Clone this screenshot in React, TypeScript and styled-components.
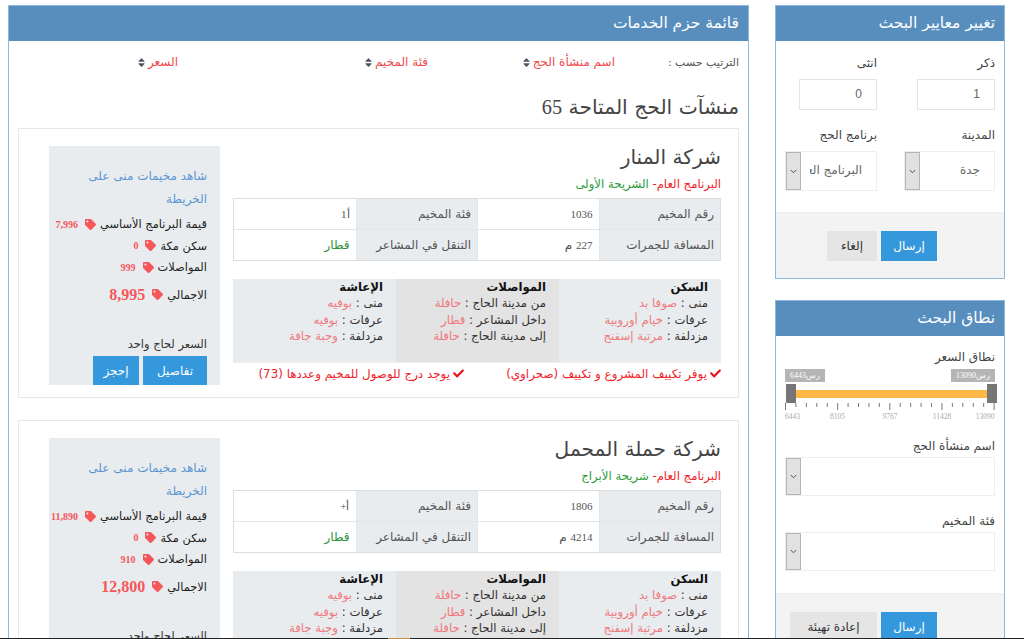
import React from "react";
import styled, { createGlobalStyle } from "styled-components";
import { FaTag, FaCheck, FaSort } from "react-icons/fa";

const Global = createGlobalStyle`
  html, body { margin: 0; padding: 0; background: #fff; height: 639px; overflow: hidden; }
  body { font-family: "DejaVu Sans", "Noto Sans", sans-serif; direction: rtl; color: #333; }
`;
const Page = styled.div`
  display: flex; gap: 26px; height: 638px; padding: 5px 19px 0 8px; box-sizing: border-box; overflow: hidden;
`;
const Strip = styled.div`
  height: 1px; display: flex; background: #222; direction: ltr;
`;
const StripMark = styled.span`
  margin-left: 388px; width: 22px; background: #c98a3a;
`;
const Side = styled.aside`
  width: 230px; flex: none; display: flex; flex-direction: column; gap: 21px;
`;
const MainCol = styled.main`
  flex: 1; min-width: 0;
`;
const Panel = styled.section`
  border: 1px solid #8fb6dc; background: #fff;
`;
const PanelHead = styled.h2`
  margin: 0; height: 35px; line-height: 34px; background: #578ebe; color: #fff; font-size: 15.5px; font-weight: 400; padding: 0 9px;
`;
const FormBody = styled.div<{ $top: number }>`
  padding: ${(p) => p.$top}px 9px 0;
`;
const FormGrid = styled.div`
  display: grid; grid-template-columns: 91px 92px; column-gap: 27px; row-gap: 15px;
`;
const NumberGrid = styled(FormGrid)`
  grid-template-columns: 78px 78px; column-gap: 40px; margin-bottom: 15px;
`;
const Field = styled.div<{ $mb?: number }>`
  display: flex; flex-direction: column; margin-bottom: ${(p) => p.$mb ?? 0}px;
`;
const Label = styled.label<{ $mb?: number }>`
  font-size: 12px; height: 20px; line-height: 20px; color: #444; margin-bottom: ${(p) => p.$mb ?? 6}px; display: block;
`;
const NumInput = styled.div`
  height: 31px; box-sizing: border-box; border: 1px solid #e5e5e5; font-family: "Liberation Sans", sans-serif;
  font-size: 12px; line-height: 29px; padding: 0 14px; color: #666;
`;
const SelectBox = styled.div<{ $h?: number }>`
  display: flex; height: ${(p) => p.$h ?? 39}px; box-sizing: border-box; border: 1px solid #eee; align-items: stretch; overflow: hidden;
`;
const SelectInner = styled.span`
  flex: 1; min-width: 0; margin: 0 14px 0 9px; overflow: hidden;
`;
const SelectText = styled.span`
  display: block; font-size: 12px; color: #666; line-height: 37px; white-space: nowrap;
`;
const Caret = styled.span`
  width: 13px; flex: none; background: #e1e1e1; border: 1px solid #b5b5b5; display: flex; align-items: center; justify-content: center; direction: ltr;
`;
const PanelFoot = styled.div<{ $h: number; $mt: number; $top: number }>`
  height: ${(p) => p.$h}px; margin-top: ${(p) => p.$mt}px; background: #f3f3f3; border-top: 1px solid #eee; box-sizing: border-box;
  display: flex; gap: 4px; padding: ${(p) => p.$top}px 67px 0 0;
  align-items: flex-start;
`;
const Btn = styled.button<{ $light?: boolean; $w: number; $h?: number }>`
  width: ${(p) => p.$w}px; height: ${(p) => p.$h ?? 30}px; border: 0; padding: 0; margin: 0; font-family: inherit; font-size: 12px; flex: none;
  background: ${(p) => (p.$light ? "#e5e5e5" : "#3598dc")}; color: ${(p) => (p.$light ? "#333" : "#fff")};
`;
const SliderWrap = styled.div`
  position: relative; height: 67px; direction: ltr;
`;
const Bubble = styled.div<{ $left?: number; $right?: number; $w: number }>`
  position: absolute; top: 0; ${(p) => (p.$left !== undefined ? `left:${p.$left}px;` : `right:${p.$right}px;`)} height: 13px; width: ${(p) => p.$w}px; text-align: center; background: #b5b5b5; color: #fff; font-size: 8px; line-height: 13px; font-family: "Liberation Serif", serif; white-space: nowrap;
`;
const Track = styled.div`
  position: absolute; top: 21px; left: 11px; right: 8px; height: 7.5px; background: #ffb848;
`;
const Handle = styled.div<{ $left?: number; $right?: number }>`
  position: absolute; top: 15px; ${(p) => (p.$left !== undefined ? `left:${p.$left}px;` : `right:${p.$right}px;`)} width: 10px; height: 19px; background: #767676;
`;
const Ticks = styled.svg`
  position: absolute; top: 34px; left: 0;
`;
const TickLabel = styled.span`
  position: absolute; top: 43px; font-family: "Liberation Serif", serif; font-size: 7.5px; color: #a3adb5; transform: translateX(-50%);
`;
const SortBar = styled.div`
  display: flex; height: 42px; align-items: center; padding: 0 9px; font-size: 12px; color: #555;
`;
const SortCell = styled.span<{ $w: number; $lead?: boolean }>`
  width: ${(p) => p.$w}px; flex: none; color: ${(p) => (p.$lead ? "#555" : "#f0484b")}; font-size: ${(p) => (p.$lead ? 11 : 12)}px; display: inline-flex; gap: 3px; align-items: center; white-space: nowrap;
  & svg { flex: none; color: #4a5560; }
`;
const BigTitle = styled.h1`
  margin: 5px 9px 0; font-size: 20.3px; font-weight: 400; line-height: 38px; height: 38px; color: #444;
  & span { font-family: "Liberation Serif", serif; }
`;
const Card = styled.article`
  margin: 2px 9px 22px; height: 270px; border: 1px solid #e8e8e8; display: flex; gap: 13px; padding: 15px 17px 0 0; box-sizing: border-box;
`;
const CardMain = styled.div`
  width: 488px; flex: none;
`;
const CompanyTitle = styled.h3`
  margin: 0; font-size: 20.2px; font-weight: 400; line-height: 26px; height: 26px; color: #444; white-space: nowrap;
`;
const Programme = styled.div`
  font-size: 11.7px; line-height: 20px; height: 20px; margin-top: 4px; margin-bottom: 4px; color: #f1232a; white-space: nowrap;
  & b { font-weight: 400; color: #2d9b3c; }
`;
const InfoGrid = styled.div`
  display: grid; grid-template-columns: repeat(4, 1fr); border: 1px solid #ddd; box-sizing: border-box; width: 488px;
`;
const InfoCell = styled.div<{ $head?: boolean; $green?: boolean }>`
  height: 30.5px; line-height: 30px; box-sizing: border-box; padding: 0 6px; font-size: 12px; white-space: nowrap; border-left: 1px solid #e3e6e8; border-bottom: 1px solid #e3e6e8; color: ${(p) => (p.$green ? "#2d9440" : "#555")}; background: ${(p) => (p.$head ? "#e9ecef" : "#fff")};
  &:nth-last-child(-n + 4) { border-bottom: 0; }
  &:nth-child(4n) { border-left: 0; }
`;
const NumText = styled.span`
  font-family: "Liberation Serif", serif; font-size: 11px;
`;
const Services = styled.div`
  margin-top: 18px; display: grid; grid-template-columns: 162px 163px 163px; width: 488px; height: 83px; border-bottom: 1px solid #eee;
`;
const ServiceCol = styled.div<{ $dark?: boolean }>`
  background: ${(p) => (p.$dark ? "#e3e3e3" : "#e9ecef")}; padding: 0 13px 0 4px; font-size: 11.7px; line-height: 16.3px; color: #333; white-space: nowrap;
  & strong { display: block; font-size: 11.7px; color: #111; }
  & em { font-style: normal; color: #f0787c; }
`;
const Notes = styled.div`
  display: flex; font-size: 11.9px; color: #f1232a; height: 21px; align-items: center;
`;
const Note = styled.div`
  width: 257px; flex: none; display: flex; gap: 3px; align-items: center; white-space: nowrap;
  & svg { flex: none; color: #e8121c; }
`;
const PriceBox = styled.div`
  width: 171px; flex: none; margin-top: 2px; background: #e9ecef; padding: 18.5px 13px 0 0; box-sizing: border-box; height: 239px; display: flex; flex-direction: column; overflow: hidden;
`;
const MapLink = styled.div`
  color: #5b96d3; font-size: 12px; line-height: 23px; margin-bottom: 3px; padding-left: 13px;
`;
const PriceRow = styled.div<{ $big?: boolean }>`
  display: flex; align-items: center; gap: 4px; flex: none; height: ${(p) => (p.$big ? 32 : 21.5)}px; margin-top: ${(p) => (p.$big ? 0.5 : 0)}px; font-size: 11.4px; color: #222; white-space: nowrap;
  & svg { flex: none; color: #f4565a; }
`;
const Amount = styled.span<{ $big?: boolean }>`
  font-family: "Liberation Serif", serif; font-weight: 700; color: #f4565a; font-size: ${(p) => (p.$big ? 16 : 10)}px; margin-right: 3px;
`;
const PerPilgrim = styled.div`
  font-size: 11.4px; margin-top: 23px; line-height: 20px; color: #333; flex: none;
`;
const BtnRow = styled.div`
  display: flex; gap: 4px; margin-top: 2px; flex: none;
`;

const Chevron = () => (
  <svg width="7" height="5" viewBox="0 0 7 5"><path d="M0.8 1 L3.5 3.8 L6.2 1" fill="none" stroke="#555" strokeWidth="1" /></svg>
);
const Sort = () => <FaSort style={{ width: 7, height: 11 }} />;
const Tag = () => <FaTag size={11} />;
const Check = () => <FaCheck size={11} />;

type Co = { name: string; tier: string; no: string; cat: string; dist: string; base: string; mecca: string; trans: string; total: string; };
const companies: Co[] = [
  { name: "شركة المنار", tier: "الشريحة الأولى", no: "1036", cat: "أ1", dist: "227", base: "7,996", mecca: "0", trans: "999", total: "8,995" },
  { name: "شركة حملة المحمل", tier: "شريحة الأبراج", no: "1806", cat: "أ+", dist: "4214", base: "11,890", mecca: "0", trans: "910", total: "12,800" },
];

const CompanyCard = ({ c }: { c: Co }) => (
  <Card>
    <CardMain>
      <CompanyTitle>{c.name}</CompanyTitle>
      <Programme>البرنامج العام- <b>{c.tier}</b></Programme>
      <InfoGrid>
        <InfoCell $head>رقم المخيم</InfoCell>
        <InfoCell><NumText>{c.no}</NumText></InfoCell>
        <InfoCell $head>فئة المخيم</InfoCell>
        <InfoCell><NumText>{c.cat}</NumText></InfoCell>
        <InfoCell $head>المسافة للجمرات</InfoCell>
        <InfoCell><NumText>{c.dist}</NumText> م</InfoCell>
        <InfoCell $head>التنقل في المشاعر</InfoCell>
        <InfoCell $green>قطار</InfoCell>
      </InfoGrid>
      <Services>
        <ServiceCol>
          <strong>السكن</strong>
          <div>منى : <em>صوفا بد</em></div>
          <div>عرفات : <em>خيام أوروبية</em></div>
          <div>مزدلفة : <em>مرتبة إسفنج</em></div>
        </ServiceCol>
        <ServiceCol $dark>
          <strong>المواصلات</strong>
          <div>من مدينة الحاج : <em>حافلة</em></div>
          <div>داخل المشاعر : <em>قطار</em></div>
          <div>إلى مدينة الحاج : <em>حافلة</em></div>
        </ServiceCol>
        <ServiceCol>
          <strong>الإعاشة</strong>
          <div>منى : <em>بوفيه</em></div>
          <div>عرفات : <em>بوفيه</em></div>
          <div>مزدلفة : <em>وجبة جافة</em></div>
        </ServiceCol>
      </Services>
      <Notes>
        <Note><Check /><span>يوفر تكييف المشروع و تكييف (صحراوي)</span></Note>
        <Note><Check /><span>يوجد درج للوصول للمخيم وعددها (73)</span></Note>
      </Notes>
    </CardMain>
    <PriceBox>
      <MapLink>شاهد مخيمات منى على الخريطة</MapLink>
      <PriceRow>قيمة البرنامج الأساسي <Tag /><Amount>{c.base}</Amount></PriceRow>
      <PriceRow>سكن مكة <Tag /><Amount>{c.mecca}</Amount></PriceRow>
      <PriceRow>المواصلات <Tag /><Amount>{c.trans}</Amount></PriceRow>
      <PriceRow $big>الاجمالي <Tag /><Amount $big>{c.total}</Amount></PriceRow>
      <PerPilgrim>السعر لحاج واحد</PerPilgrim>
      <BtnRow><Btn $w={64}>تفاصيل</Btn><Btn $w={46}>إحجز</Btn></BtnRow>
    </PriceBox>
  </Card>
);

const ticks = Array.from({ length: 21 }, (_, i) => i);

export default function App() {
  return (
    <>
      <Global />
      <Page>
        <Side>
          <Panel>
            <PanelHead>تغيير معايير البحث</PanelHead>
            <FormBody $top={12}>
              <NumberGrid>
                <Field>
                  <Label>ذكر</Label>
                  <NumInput>1</NumInput>
                </Field>
                <Field>
                  <Label>انثى</Label>
                  <NumInput>0</NumInput>
                </Field>
              </NumberGrid>
              <FormGrid>
                <Field>
                  <Label>المدينة</Label>
                  <SelectBox $h={40}><SelectInner><SelectText>جدة</SelectText></SelectInner><Caret><Chevron /></Caret></SelectBox>
                </Field>
                <Field>
                  <Label>برنامج الحج</Label>
                  <SelectBox $h={40}><SelectInner><SelectText>البرنامج العام</SelectText></SelectInner><Caret><Chevron /></Caret></SelectBox>
                </Field>
              </FormGrid>
            </FormBody>
            <PanelFoot $h={66} $mt={21} $top={18}>
              <Btn $w={56}>إرسال</Btn>
              <Btn $light $w={50}>إلغاء</Btn>
            </PanelFoot>
          </Panel>
          <Panel>
            <PanelHead>نطاق البحث</PanelHead>
            <FormBody $top={11}>
              <Label as="div" $mb={2}>نطاق السعر</Label>
              <SliderWrap>
                <Bubble $left={0} $w={40}>رس6443</Bubble>
                <Bubble $right={0} $w={44}>رس13090</Bubble>
                <Handle $left={1} />
                <Track />
                <Handle $right={-2} />
                <Ticks width="212" height="9">
                  {ticks.map((i) => {
                    const x = 0.5 + i * 10.43;
                    return <line key={i} x1={x} x2={x} y1={0} y2={i % 5 === 0 ? 7 : 4} stroke="#777" />;
                  })}
                </Ticks>
                <TickLabel style={{ left: 7.5 }}>6443</TickLabel>
                <TickLabel style={{ left: 52.5 }}>8105</TickLabel>
                <TickLabel style={{ left: 105 }}>9767</TickLabel>
                <TickLabel style={{ left: 157 }}>11428</TickLabel>
                <TickLabel style={{ left: 200 }}>13090</TickLabel>
              </SliderWrap>
              <Field $mb={15}>
                <Label $mb={1}>اسم منشأة الحج</Label>
                <SelectBox><SelectInner><SelectText /></SelectInner><Caret><Chevron /></Caret></SelectBox>
              </Field>
              <Field>
                <Label $mb={1}>فئة المخيم</Label>
                <SelectBox><SelectInner><SelectText /></SelectInner><Caret><Chevron /></Caret></SelectBox>
              </Field>
            </FormBody>
            <PanelFoot $h={60} $mt={22} $top={18}>
              <Btn $w={56}>إرسال</Btn>
              <Btn $light $w={87}>إعادة تهيئة</Btn>
            </PanelFoot>
          </Panel>
        </Side>
        <MainCol>
          <Panel>
            <PanelHead>قائمة حزم الخدمات</PanelHead>
            <SortBar>
              <SortCell $lead $w={124}>الترتيب حسب :</SortCell>
              <SortCell $w={187}>اسم منشأة الحج <Sort /></SortCell>
              <SortCell $w={250}>فئة المخيم <Sort /></SortCell>
              <SortCell $w={100}>السعر <Sort /></SortCell>
            </SortBar>
            <BigTitle>منشآت الحج المتاحة <span>65</span></BigTitle>
            {companies.map((c) => <CompanyCard key={c.name} c={c} />)}
          </Panel>
        </MainCol>
      </Page>
      <Strip><StripMark /></Strip>
    </>
  );
}
